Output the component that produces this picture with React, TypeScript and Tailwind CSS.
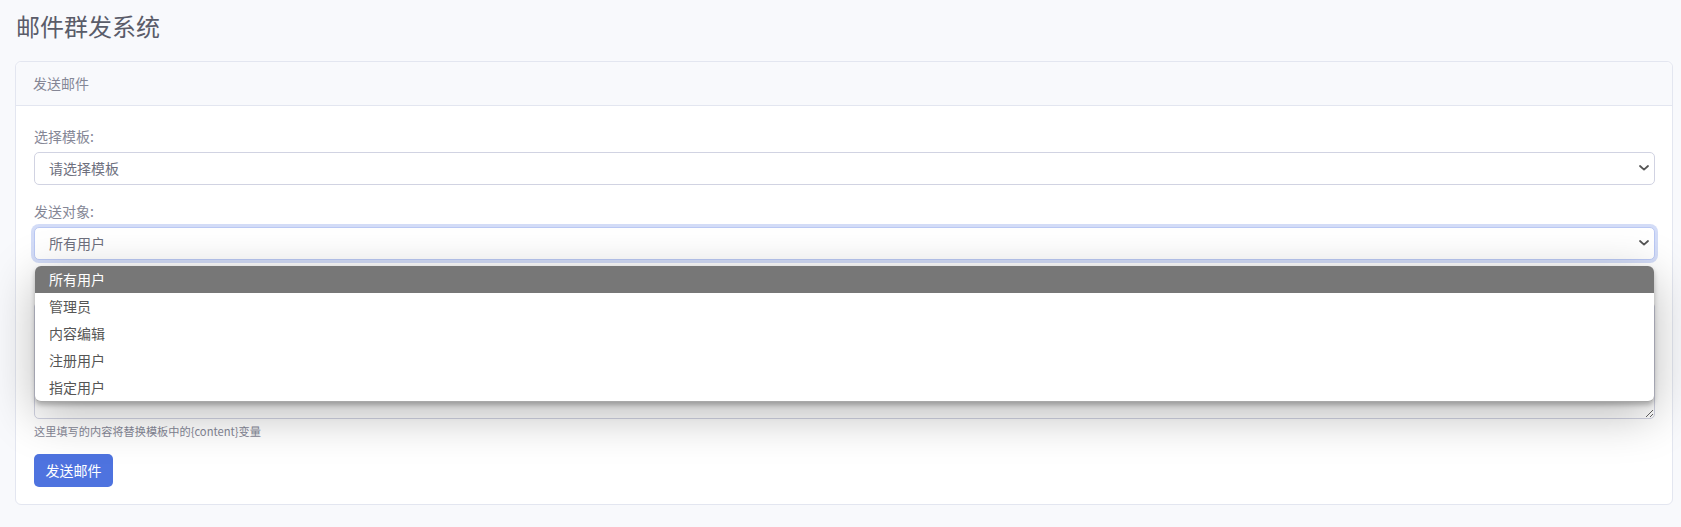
import { useState } from "react";

const options = ["所有用户", "管理员", "内容编辑", "注册用户", "指定用户"];

const Chevron = () => (
  <svg width="10" height="6" viewBox="0 0 10 6" className="absolute right-[5px] top-1/2 -translate-y-1/2">
    <path d="M1 1l4 3.6L9 1" fill="none" stroke="#555" strokeWidth="1.8" strokeLinecap="round" strokeLinejoin="round" />
  </svg>
);

const App = () => {
  const [target] = useState(options[0]);

  return (
    <div
      className="min-h-[527px] bg-[#f8f9fc] pl-[15px] pr-[8px] pt-[12px] text-[#858796]"
      style={{ fontFamily: '"Noto Sans CJK SC", "Noto Sans", sans-serif' }}
    >
      <h4 className="mb-[20px] pl-[1px] text-[24px] leading-[1.2] font-normal text-[#5a5c69]">邮件群发系统</h4>

      <div className="rounded-[6px] border border-[#e3e6f0] bg-white">
        <div className="rounded-t-[6px] border-b border-[#e3e6f0] bg-[#f8f9fc] px-[17px] py-[11px] text-[14px] leading-[21px]">
          发送邮件
        </div>

        <div className="pl-[18px] pr-[17px] pt-[20px] pb-[17px] text-[14px] leading-[21px]">
          <div className="mb-4">
            <label className="mb-[5px] block">选择模板:</label>
            <div className="relative h-[33px] rounded-[5px] border border-[#d1d3e2] bg-white pl-[14px] text-[#6e707e] leading-[31px]">
              请选择模板
              <Chevron />
            </div>
          </div>

          <div className="relative z-10 mb-4">
            <label className="mb-[5px] block">发送对象:</label>
            <div className="relative h-[33px] rounded-[5px] border border-[#bac8f3] bg-white pl-[14px] text-[#6e707e] leading-[31px] shadow-[0_0_0_3px_rgba(78,115,223,0.25)]">
              {target}
              <Chevron />
            </div>
            <ul className="absolute left-[1px] right-[1px] top-[65px] overflow-hidden rounded-[6px] border-b border-[#a8a8a8] bg-white shadow-[0_3px_5px_rgba(0,0,0,0.25),0_12px_48px_rgba(0,0,0,0.28)]">
              {options.map((o) => (
                <li
                  key={o}
                  className={
                    o === target
                      ? "h-[27px] bg-[#777777] pl-[14px] leading-[27px] text-white"
                      : "h-[27px] pl-[14px] leading-[27px] text-[#555]"
                  }
                >
                  {o}
                </li>
              ))}
            </ul>
          </div>

          <div className="mb-[14px]">
            {/* label sits under the open dropdown */}
            <div className="mb-[5px] h-[21px]" />
            <textarea
              className="block h-[117px] w-full rounded-[5px] border border-[#d1d3e2] bg-white px-[14px] py-[6px] text-[#6e707e] outline-none"
              defaultValue=""
            />
            <small className="mt-[4px] block text-[11.2px] leading-[17px] text-[#858796]">
              这里填写的内容将替换模板中的{"{content}"}变量
            </small>
          </div>

          <button className="h-[33px] w-[79px] rounded-[5px] bg-[#4e73df] text-[14px] leading-[21px] text-white">
            发送邮件
          </button>
        </div>
      </div>
    </div>
  );
};

export default App;
